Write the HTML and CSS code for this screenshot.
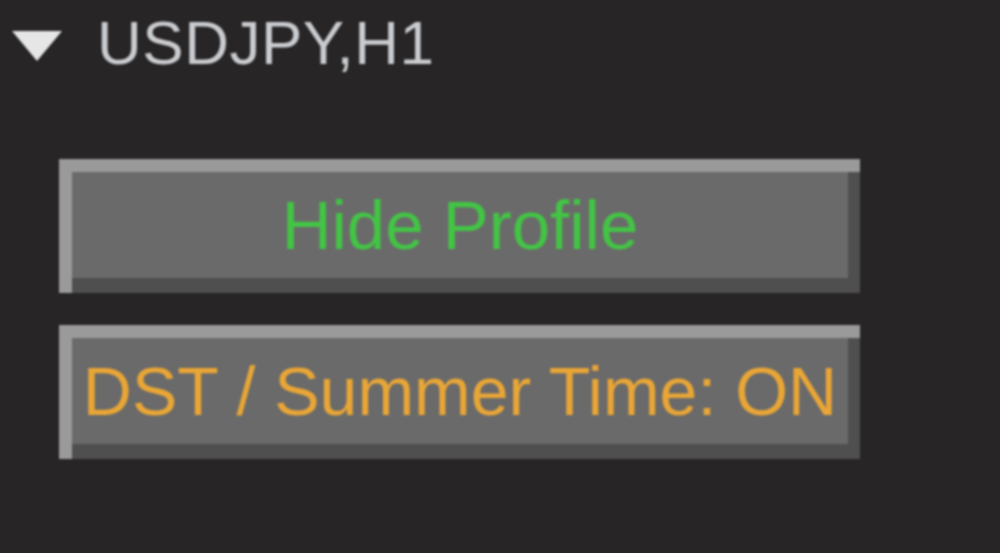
FILE: index.html
```html
<!DOCTYPE html>
<html>
<head>
<meta charset="utf-8">
<link rel="stylesheet" href="styles.css">
</head>
<body>
<div class="panel">
  <div class="title-row">
    <svg class="caret" width="54" height="34" viewBox="0 0 54 34"><polygon points="2,2 52,2 27,32" fill="#e6e6e6"/></svg>
    <span class="title">USDJPY,H1</span>
  </div>
  <div class="buttons">
    <div class="btn btn-green">Hide Profile</div>
    <div class="btn btn-orange">DST / Summer Time: ON</div>
  </div>
</div>
</body>
</html>
```
FILE: styles.css
```css
html, body {
  margin: 0;
  padding: 0;
  background: #272526;
  width: 1000px;
  height: 553px;
  overflow: hidden;
}
.panel {
  padding-top: 12px;
  font-family: "Liberation Sans", Arial, sans-serif;
}
.title-row {
  display: flex;
  align-items: flex-start;
  height: 70px;
}
.caret {
  margin-left: 10px;
  margin-top: 17px;
  filter: blur(1px);
}
.title {
  margin-left: 33px;
  font-size: 62px;
  line-height: 1;
  color: #c9cbcf;
  letter-spacing: 0.5px;
  filter: blur(0.8px);
}
.buttons {
  display: flex;
  flex-direction: column;
  gap: 32px;
  margin-left: 59px;
  margin-top: 77px;
  width: 801px;
}
.btn {
  box-sizing: border-box;
  height: 134px;
  border-style: solid;
  border-width: 13px 0 0 13px;
  border-color: #9a9a9a;
  box-shadow: inset -12px -15px 0 #4f4f4f;
  background: #6a6a6a;
  padding: 0 12px 15px 0;
  display: flex;
  align-items: center;
  justify-content: center;
  line-height: 1;
  white-space: nowrap;
  overflow: hidden;
  filter: blur(0.8px);
}
.btn-green {
  font-size: 69px;
  color: #43c445;
}
.btn-orange {
  font-size: 68px;
  color: #e9a636;
}
```
